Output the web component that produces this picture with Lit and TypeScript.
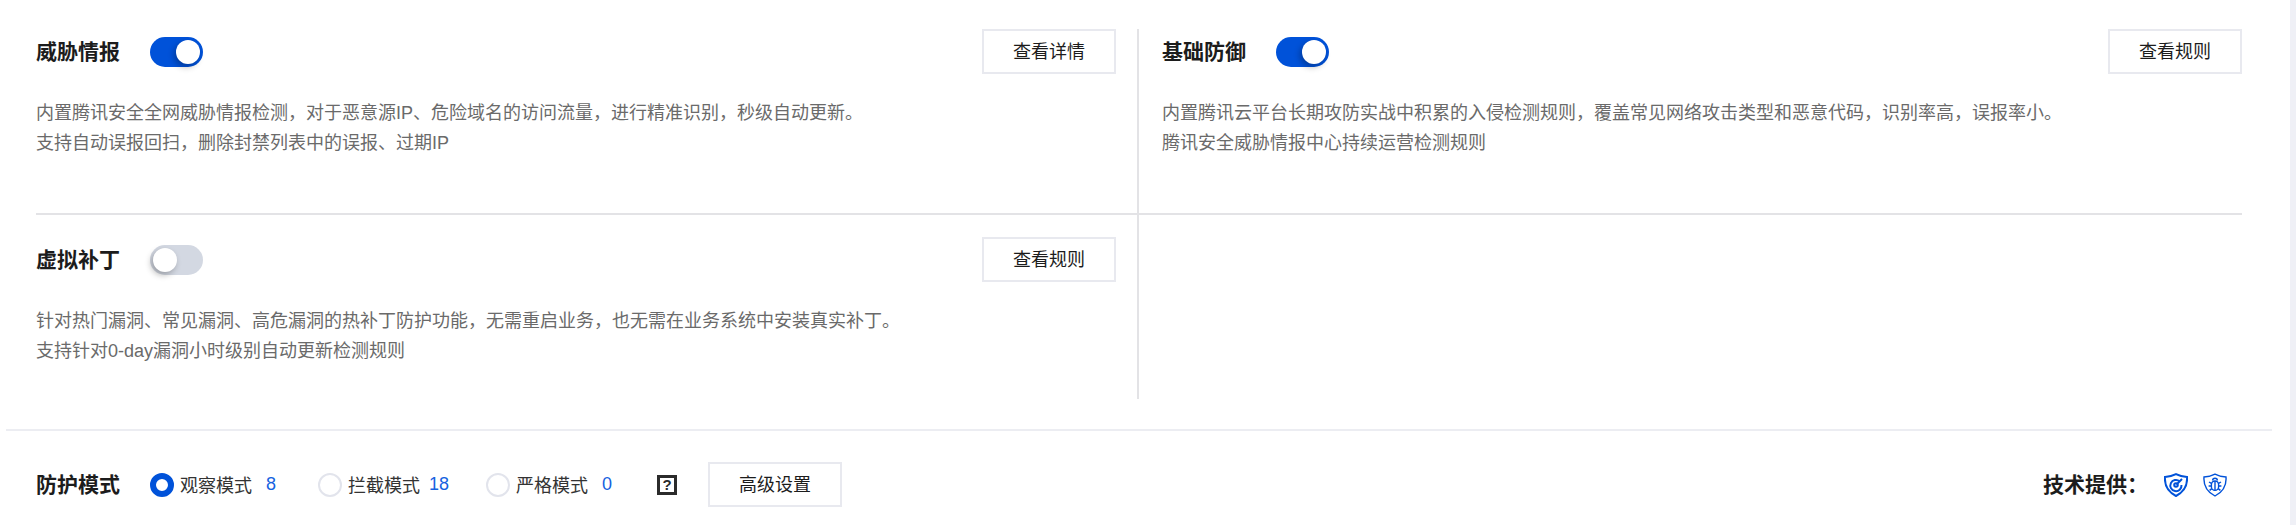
import { LitElement, css, html, svg } from 'lit'
import { customElement } from 'lit/decorators.js'
import { classMap } from 'lit/directives/class-map.js'

const cards = [
  {
    title: '威胁情报',
    on: true,
    action: '查看详情',
    lines: [
      '内置腾讯安全全网威胁情报检测，对于恶意源IP、危险域名的访问流量，进行精准识别，秒级自动更新。',
      '支持自动误报回扫，删除封禁列表中的误报、过期IP',
    ],
  },
  {
    title: '基础防御',
    on: true,
    action: '查看规则',
    lines: [
      '内置腾讯云平台长期攻防实战中积累的入侵检测规则，覆盖常见网络攻击类型和恶意代码，识别率高，误报率小。',
      '腾讯安全威胁情报中心持续运营检测规则',
    ],
  },
  {
    title: '虚拟补丁',
    on: false,
    action: '查看规则',
    lines: [
      '针对热门漏洞、常见漏洞、高危漏洞的热补丁防护功能，无需重启业务，也无需在业务系统中安装真实补丁。',
      '支持针对0-day漏洞小时级别自动更新检测规则',
    ],
  },
]

const modes = [
  { label: '观察模式', count: 8, checked: true },
  { label: '拦截模式', count: 18, checked: false },
  { label: '严格模式', count: 0, checked: false },
]

const shield = svg`<path d="M12 1.2C15.4 3 18.8 3.8 23 4C23.6 11.6 20 18.8 12 23C4 18.8 .4 11.6 1 4C5.2 3.8 8.6 3 12 1.2Z" />`

@customElement('app-root')
export class AppRoot extends LitElement {
  render() {
    return html`
      <div class="page">
        <div class="grid">
          ${cards.map(
            (c) => html`
              <section class="card">
                <div class="head">
                  <div class="name">
                    <h3>${c.title}</h3>
                    <span class=${classMap({ toggle: true, on: c.on })}><i></i></span>
                  </div>
                  <button>${c.action}</button>
                </div>
                <p>${c.lines[0]}<br />${c.lines[1]}</p>
              </section>
            `
          )}
          <section class="card"></section>
        </div>
        <div class="divider"></div>
        <footer>
          <div class="modes">
            <h3>防护模式</h3>
            ${modes.map(
              (m) => html`
                <label class="mode">
                  <span class=${classMap({ radio: true, checked: m.checked })}></span>
                  <span class="text">${m.label}</span>
                  <span class="count">${m.count}</span>
                </label>
              `
            )}
            <span class="help">?</span>
            <button>高级设置</button>
          </div>
          <div class="vendor">
            <h3>技术提供：</h3>
            <svg viewBox="0 0 24 24" class="logo">
              ${shield}
              <path d="M15.6 8.3A5.6 5.6 0 1 0 17.5 12" />
              <circle cx="12" cy="12" r="1.8" />
              <path d="M12.5 11.5L18 6" />
            </svg>
            <svg viewBox="0 0 24 24" class="logo thin">
              ${shield}
              <path d="M9.6 7.6A2.4 2.4 0 0 1 14.4 7.6" />
              <rect x="8.4" y="8" width="7.2" height="9.4" rx="3.6" />
              <path d="M12 8V17.4M8.4 10.4L6 9M15.6 10.4L18 9M8.2 13H5.6M15.8 13H18.4M8.8 15.6L6.6 17.4M15.2 15.6L17.4 17.4" />
            </svg>
          </div>
        </footer>
      </div>
    `
  }

  static styles = css`
    :host {
      display: flex;
      height: 525px;
      background: #eff0f6;
      font-family: 'Liberation Sans', 'Noto Sans CJK SC', sans-serif;
      overflow: hidden;
    }

    .page {
      box-sizing: border-box;
      width: 2290px;
      height: 525px;
      padding-top: 29px;
      background: #fff;
    }

    h3 {
      margin: 0;
      font-size: 21px;
      line-height: 30px;
      font-weight: 700;
      color: #1c1c1c;
    }

    button {
      box-sizing: border-box;
      width: 134px;
      height: 45px;
      padding: 0 0 3px;
      border: 2px solid #e8e9ef;
      background: #fff;
      font: inherit;
      font-size: 18px;
      color: #1c1c1c;
    }

    .grid {
      display: grid;
      grid-template-columns: 1103px 1103px;
      grid-template-rows: 186px 184px;
      margin-left: 36px;
      width: 2206px;
    }

    .card {
      box-sizing: border-box;
    }
    .card:nth-child(odd) {
      padding-right: 21px;
      border-right: 2px solid #e3e3e6;
    }
    .card:nth-child(even) {
      padding-left: 23px;
    }
    .card:nth-child(-n + 2) {
      border-bottom: 2px solid #e3e3e6;
    }
    .card:nth-child(n + 3) {
      padding-top: 22px;
    }

    .head {
      display: flex;
      align-items: center;
      justify-content: space-between;
    }

    .name {
      display: flex;
      align-items: center;
      gap: 30px;
    }

    .toggle {
      display: flex;
      align-items: center;
      box-sizing: border-box;
      width: 53px;
      height: 30px;
      padding: 0 3px;
      border-radius: 15px;
      background: #d3d8e2;
    }
    .toggle i {
      width: 24px;
      height: 24px;
      border-radius: 50%;
      background: #fff;
      box-shadow: -2px 3px 6px rgba(0, 0, 0, 0.28);
    }
    .toggle.on {
      justify-content: flex-end;
      background: #0052d9;
    }

    p {
      margin: 24px 0 0;
      font-size: 18px;
      line-height: 30px;
      color: #6a6a6a;
    }

    .divider {
      height: 2px;
      width: 2266px;
      margin: 30px 0 0 6px;
      background: #ecedf2;
    }

    footer {
      display: flex;
      align-items: center;
      justify-content: space-between;
      padding: 31px 63px 0 36px;
    }

    .modes,
    .vendor,
    .mode {
      display: flex;
      align-items: center;
    }

    .modes h3 {
      margin-right: 30px;
    }

    .mode {
      width: 168px;
      font-size: 18px;
      color: #333;
    }

    .text {
      padding-bottom: 2px;
    }

    .radio {
      box-sizing: border-box;
      width: 24px;
      height: 24px;
      margin-right: 6px;
      border: 2px solid #e2e4ec;
      border-radius: 50%;
      background: #fff;
    }
    .radio.checked {
      border: 6px solid #0052d9;
    }

    .count {
      width: 38px;
      text-align: center;
      color: #1662e0;
    }

    .help {
      box-sizing: border-box;
      width: 20px;
      height: 20px;
      margin: 0 31px 0 3px;
      border: 3px solid #2b2b2b;
      font-size: 15px;
      font-weight: 700;
      line-height: 14px;
      text-align: center;
      color: #2b2b2b;
    }

    .vendor h3 {
      width: 121px;
    }

    .logo {
      width: 24px;
      height: 24px;
      fill: none;
      stroke: #0052d9;
      stroke-width: 2;
    }
    .logo + .logo {
      margin-left: 15px;
    }
    .logo.thin {
      stroke-width: 1.4;
    }
  `
}

declare global {
  interface HTMLElementTagNameMap {
    'app-root': AppRoot
  }
}
